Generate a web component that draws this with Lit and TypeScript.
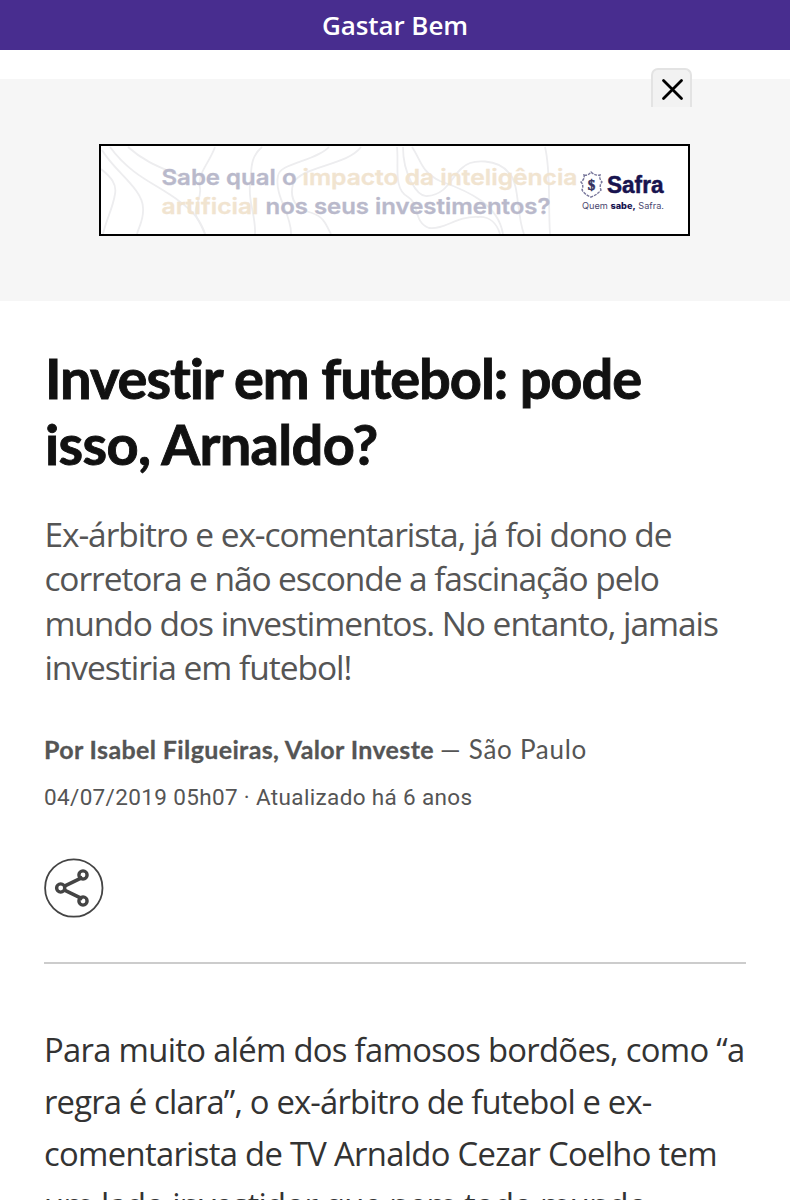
import { LitElement, html, css, svg } from "lit";
import { customElement, property, state } from "lit/decorators.js";

/** One line of text whose tracking is adjusted to a given measure. */
@customElement("fit-line")
class FitLine extends LitElement {
  static styles = css`
    :host { display: block; white-space: pre; }
    .text { display: inline-block; }
  `;
  @property({ type: Number }) measure = 0;
  @state() private tracking = 0;

  firstUpdated() {
    const box = this.renderRoot.querySelector(".text") as HTMLElement;
    const count = [...(this.textContent ?? "")].length;
    this.tracking = (this.measure - box.getBoundingClientRect().width) / count;
  }
  render() {
    return html`<span class="text" style="letter-spacing:${this.tracking}px"><slot></slot></span>`;
  }
}

@customElement("safra-banner")
class SafraBanner extends LitElement {
  static styles = css`
    :host { display: block; width: 587px; height: 88px; border: 2px solid #000; background: #fff; }
    .art { display: block; }
    .line { fill: none; stroke: #ededef; stroke-width: 1.8; }
    .copy { font: 600 21.5px Inter, sans-serif; stroke-width: .3; }
    .cold { fill: #b9b9cb; stroke: #b9b9cb; }
    .warm { fill: #f1e4d0; stroke: #f1e4d0; }
    .brand { font: 700 23px "Liberation Sans", sans-serif; fill: #17134f; stroke: #17134f; stroke-width: .5; }
    .tag { font: 400 8.6px Inter, sans-serif; fill: #4b486f; }
    .strong { font-weight: 800; fill: #17134f; }
    .crest { fill: none; stroke: #77769a; stroke-width: 1.4; }
    .inner { font: 700 15px "Liberation Serif", serif; fill: #35325f; stroke: #35325f; stroke-width: .5; }
  `;
  render() {
    const contours = [
      "M0 23C10 31 16 38 14 48C12 62 5 74 2 88",
      "M1 4C13 25 42 43 42 62C43 74 38 80 36 88",
      "M9 1C31 31 56 38 78 55C96 68 100 77 104 88",
      "M27 1C47 19 65 23 86 33",
      "M114 1C108 18 96 27 99 42C101 53 91 62 96 72C100 79 102 82 104 88",
      "M161 1C148 12 151 25 149 38C147 57 155 69 154 88",
      "M228 1C215 15 178 17 177 30C173 50 191 69 190 88",
      "M260 1C246 20 199 20 192 38C188 54 195 63 211 67C225 72 225 80 230 88",
      "M296 1C298 20 292 43 307 51C319 58 312 76 328 82C344 84 355 70 377 71C389 70 396 78 399 88",
      "M302 1C302 28 316 51 326 50C346 49 350 31 361 22C371 12 397 13 408 27C419 38 415 67 423 88",
      "M311 1C320 14 320 26 339 35C370 46 397 59 402 88",
      "M444 1C450 25 447 58 449 88",
    ];
    return html`<svg class="art" width="587" height="88" viewBox="0 0 587 88">
      ${contours.map((d) => svg`<path class="line" d=${d} />`)}
      <text class="copy cold" x="60.5" y="39" textLength="135" lengthAdjust="spacingAndGlyphs">Sabe qual o</text>
      <text class="copy warm" x="201.5" y="39" textLength="275" lengthAdjust="spacingAndGlyphs">impacto da inteligência</text>
      <text class="copy warm" x="60.5" y="68" textLength="97" lengthAdjust="spacingAndGlyphs">artificial</text>
      <text class="copy cold" x="164.5" y="68" textLength="285" lengthAdjust="spacingAndGlyphs">nos seus investimentos?</text>
      <path class="crest" stroke-dasharray="3 1" d="M483 29Q487 30 490 26Q494 30 499 29Q498 33 501 36Q498 39 500 44Q496 49 490 51Q484 49 481 44Q483 39 480 36Q484 33 483 29Z" />
      <text class="inner" x="486.7" y="43.5">$</text>
      <text class="brand" x="506" y="46.5" textLength="56.5" lengthAdjust="spacingAndGlyphs">Safra</text>
      <text class="tag" x="481" y="62.5" textLength="82" lengthAdjust="spacingAndGlyphs">Quem <tspan class="strong">sabe,</tspan> Safra.</text>
    </svg>`;
  }
}

@customElement("app-root")
class AppRoot extends LitElement {
  static styles = css`
    :host { display: block; height: 1200px; overflow: hidden; background: #fff; font-family: "Open Sans", sans-serif; color: #555; }
    .bar { height: 50px; background: #482d8f; color: #fff; display: flex; justify-content: center; font: 600 26px/51px "Open Sans", sans-serif; }
    .ad { margin-top: 29px; height: 222px; background: #f6f6f6; display: flex; flex-direction: column; position: relative; }
    .banner { margin: 65px 0 0 99px; }
    .close { position: absolute; left: 651px; top: -11px; width: 37px; height: 37px; padding: 0; border: 2px solid #e3e3e3; border-bottom: 0; border-radius: 7px 7px 0 0; background: #f2f2f2; box-sizing: content-box; }
    .cross { display: block; }
    .article { padding: 44px 44px 0; }
    .title { margin: 0; padding-left: 1px; color: #111; font: 700 56px/66px Lato, sans-serif; -webkit-text-stroke: .9px #111; }
    .summary { margin: 35px 0 0; padding-left: .4px; font: 400 33.5px/44.3px "Open Sans", sans-serif; color: #555; }
    .byline { margin-top: 42px; height: 36px; display: flex; font: 400 26px/36px Lato, sans-serif; color: #555; }
    .author { font-weight: 700; font-size: 25px; width: 396px; -webkit-text-stroke: .3px #555; }
    .date { margin-top: 14px; font: 400 22.5px/32px Roboto, sans-serif; color: #555; }
    .share { display: block; margin-top: 45px; padding: 0; border: 0; background: none; width: 60px; height: 60px; }
    .glyph { display: block; }
    .body { margin-top: 44px; padding-top: 60px; border-top: 2px solid #ccc; font: 400 32.8px/51.7px "Open Sans", sans-serif; color: #333; }
  `;
  render() {
    return html`
      <header class="bar"><fit-line measure="146">Gastar Bem</fit-line></header>
      <section class="ad">
        <safra-banner class="banner"></safra-banner>
        <button class="close" aria-label="Fechar">
          <svg class="cross" width="37" height="37" viewBox="0 0 37 37"><path d="M10.5 10.5L28.5 28.5M28.5 10.5L10.5 28.5" fill="none" stroke="#000" stroke-width="2.8" stroke-linecap="round"/></svg>
        </button>
      </section>
      <main class="article">
        <h1 class="title">
          <fit-line measure="597">Investir em futebol: pode</fit-line>
          <fit-line measure="332.5">isso, Arnaldo?</fit-line>
        </h1>
        <div class="summary">
          <fit-line measure="627">Ex-árbitro e ex-comentarista, já foi dono de</fit-line>
          <fit-line measure="614.5">corretora e não esconde a fascinação pelo</fit-line>
          <fit-line measure="673.5">mundo dos investimentos. No entanto, jamais</fit-line>
          <fit-line measure="307">investiria em futebol!</fit-line>
        </div>
        <div class="byline">
          <fit-line class="author" measure="390">Por Isabel Filgueiras, Valor Investe</fit-line>
          <fit-line measure="147">— São Paulo</fit-line>
        </div>
        <fit-line class="date" measure="428.5">04/07/2019 05h07 · Atualizado há 6 anos</fit-line>
        <button class="share" aria-label="Compartilhar">
          <svg class="glyph" width="60" height="60" viewBox="0 0 60 60" fill="none" stroke="#444">
            <circle cx="29.8" cy="30" r="28.7" stroke-width="1.8"/>
            <path d="M38.5 19.3L20.5 28.2M20.5 32.2L38.5 40.8" stroke-width="3.6"/>
            <circle cx="39" cy="17" r="4.1" stroke-width="3.4"/>
            <circle cx="16.7" cy="30" r="4.1" stroke-width="3.4"/>
            <circle cx="39" cy="43" r="4.1" stroke-width="3.4"/>
          </svg>
        </button>
        <div class="body">
          <fit-line measure="700.5">Para muito além dos famosos bordões, como “a</fit-line>
          <fit-line measure="607.5">regra é clara”, o ex-árbitro de futebol e ex-</fit-line>
          <fit-line measure="673">comentarista de TV Arnaldo Cezar Coelho tem</fit-line>
          <fit-line measure="603">um lado investidor que nem todo mundo</fit-line>
        </div>
      </main>
    `;
  }
}
